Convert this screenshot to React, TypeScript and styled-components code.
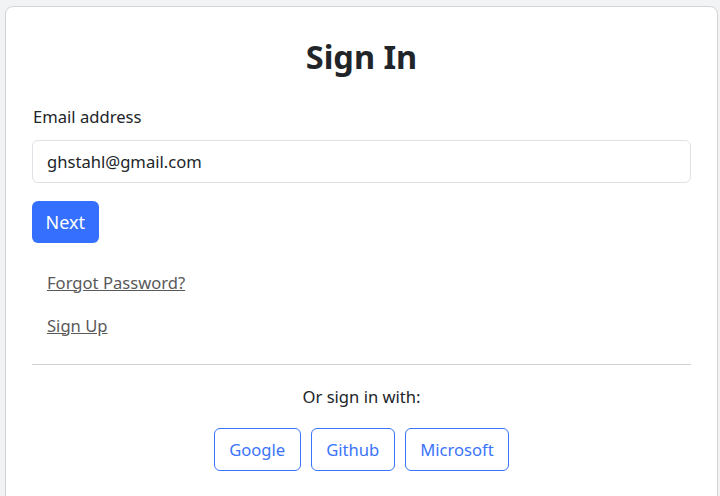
import React, { useState, FormEvent } from 'react';
import styled, { createGlobalStyle } from 'styled-components';

const GlobalStyle = createGlobalStyle`
  html, body {
    margin: 0;
    padding: 0;
    background: #f2f3f5;
    font-family: "Noto Sans", "Open Sans", Arial, sans-serif;
    color: #212529;
  }
`;

const Page = styled.div`
  padding: 6px 2px 0 5px;
  height: 496px;
  box-sizing: border-box;
  overflow: hidden;
`;

const Card = styled.div`
  background: #fff;
  border: 1px solid #d4d4d6;
  border-radius: 8px;
  padding: 30px 26px 40px 26px;
  min-height: 520px;
  box-sizing: border-box;
`;

const Title = styled.h1`
  margin: 0 0 29px 0;
  text-align: center;
  font-size: 32.5px;
  font-weight: 700;
  line-height: 1.2;
`;

const Form = styled.form`
  display: flex;
  flex-direction: column;
`;

const Label = styled.label`
  font-size: 16.6px;
  line-height: 1.5;
  margin-bottom: 10px;
  padding-left: 1px;
`;

const Input = styled.input`
  height: 43px;
  box-sizing: border-box;
  border: 1px solid #dee2e6;
  border-radius: 6px;
  padding: 0 14px;
  font-family: inherit;
  font-size: 16.6px;
  color: #212529;
  outline: none;
`;

const PrimaryButton = styled.button`
  align-self: flex-start;
  margin-top: 18px;
  height: 42px;
  padding: 0 13.5px;
  border: none;
  border-radius: 6px;
  background: #346ffd;
  color: #fff;
  font-family: inherit;
  font-size: 18px;
  cursor: pointer;
`;

const Links = styled.div`
  display: flex;
  flex-direction: column;
  align-items: flex-start;
  gap: 18px;
  padding: 28px 15px 25px;
`;

const TextLink = styled.a`
  color: #595959;
  font-size: 16.6px;
  line-height: 1.5;
  text-decoration: underline;
  cursor: pointer;
`;

const Divider = styled.hr`
  margin: 0;
  border: none;
  border-top: 1px solid #cfcfcf;
`;

const AltText = styled.p`
  margin: 20px 0 18px;
  text-align: center;
  font-size: 16.6px;
  line-height: 1.5;
`;

const Providers = styled.div`
  display: flex;
  justify-content: center;
  gap: 10px;
`;

const OutlineButton = styled.button`
  height: 43px;
  padding: 0 14.5px;
  background: #fff;
  border: 1px solid #3a74fb;
  border-radius: 6px;
  color: #3a74fb;
  font-family: inherit;
  font-size: 16.6px;
  cursor: pointer;
`;

export default function App() {
    const [email, setEmail] = useState('ghstahl@gmail.com');

    const _onChange = (event: FormEvent<HTMLInputElement>) => {
        setEmail(event.currentTarget.value);
    }

    return (
        <>
            <GlobalStyle />
            <Page>
                <Card>
                    <Title>Sign In</Title>
                    <Form onSubmit={e => e.preventDefault()}>
                        <Label htmlFor="email">Email address</Label>
                        <Input id="email" type="email" value={email} onChange={_onChange} />
                        <PrimaryButton type="submit">Next</PrimaryButton>
                    </Form>
                    <Links>
                        <TextLink>Forgot Password?</TextLink>
                        <TextLink>Sign Up</TextLink>
                    </Links>
                    <Divider />
                    <AltText>Or sign in with:</AltText>
                    <Providers>
                        <OutlineButton>Google</OutlineButton>
                        <OutlineButton>Github</OutlineButton>
                        <OutlineButton>Microsoft</OutlineButton>
                    </Providers>
                </Card>
            </Page>
        </>
    )
}
